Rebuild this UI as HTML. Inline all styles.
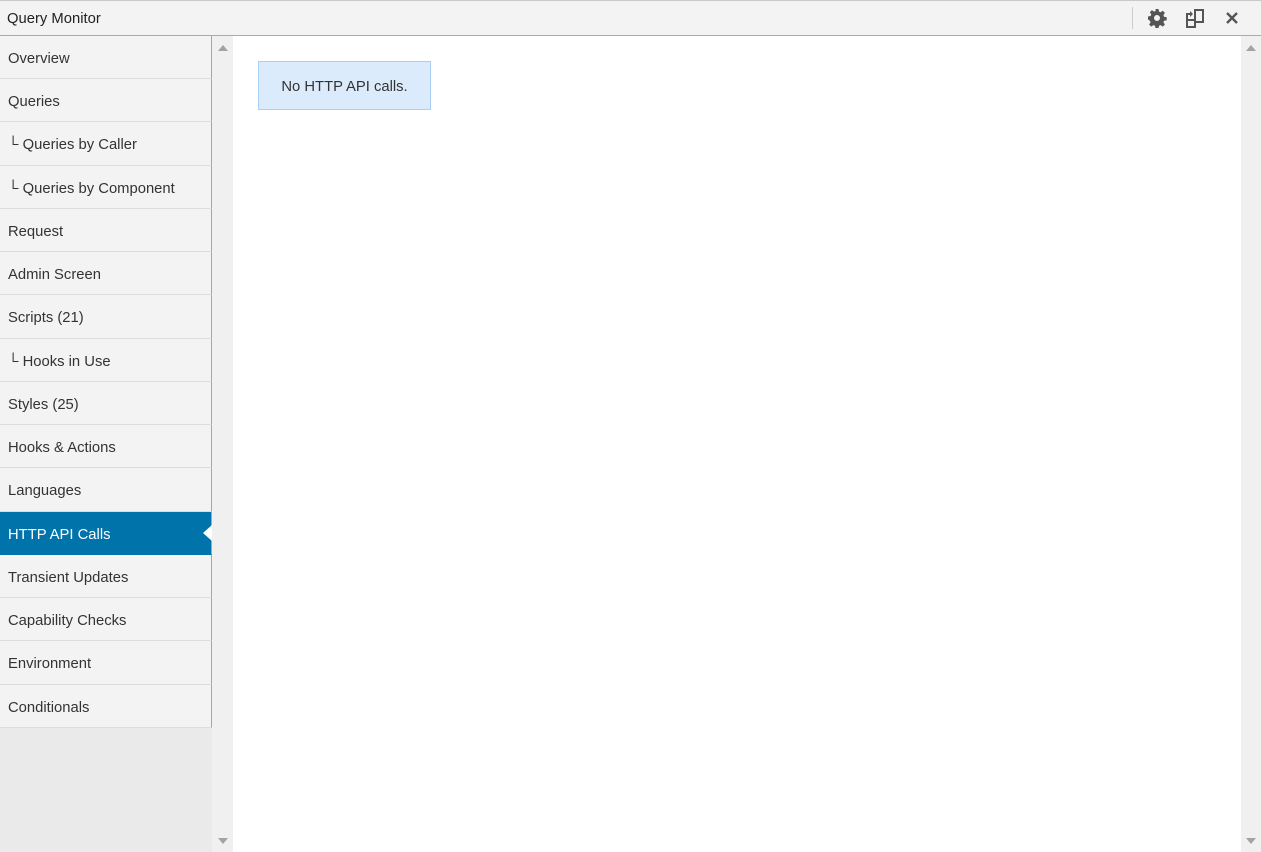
<!DOCTYPE html>
<html><head><meta charset="utf-8"><style>
*{box-sizing:border-box;margin:0;padding:0}
body{width:1261px;height:852px;overflow:hidden;background:#fff;font-family:"Liberation Sans",sans-serif;font-size:14px;color:#333;position:relative}
#hdr{position:absolute;left:0;top:0;width:1261px;height:36px;background:#f3f3f3;border-top:1px solid #c8c8c8;border-bottom:1px solid #aaa}
#hdr .t{position:absolute;left:7px;top:10px;font-size:14.8px;color:#222}
#hdr .sep{position:absolute;left:1132px;top:6px;width:1px;height:22px;background:#ccc}
#side{position:absolute;left:0;top:36px;width:212px;height:816px;background:#eaeaea}
.it{position:absolute;left:0;width:212px;background:#f3f3f3;border-right:1px solid #a7a7a7;border-bottom:1px solid #ddd;padding-left:8px;padding-top:2px;line-height:42px;font-size:14.8px;color:#333;white-space:nowrap}
.it.a{background:#0073aa;color:#fff;border-bottom-color:#0073aa}
.it.a:after{content:"";position:absolute;right:-1px;top:13px;border:8px solid transparent;border-right-color:#fff;border-left-width:0;border-right-width:9px}
.sb{position:absolute;top:36px;height:816px;background:#f0f0f0}
.up,.dn{position:absolute;left:6px;width:0;height:0;border-left:5px solid transparent;border-right:5px solid transparent}
.up{top:9px;border-bottom:6px solid #a3a3a3}
.dn{bottom:8px;border-top:6px solid #a3a3a3}
#note{position:absolute;left:258px;top:61px;width:173px;height:49px;background:#dcebfb;border:1px solid #a9cff5;font-size:14.8px;color:#333;padding-top:2px;line-height:47px;text-align:center}
</style></head><body>
<div id="hdr"><span class="t">Query Monitor</span><div class="sep"></div>
<svg style="position:absolute;left:1147px;top:7px" width="20" height="20" viewBox="0 0 20 20"><path fill="#555" d="M8.5 1h3l.5 2.6 1.6.7 2.2-1.5 2.1 2.1-1.5 2.2.7 1.6 2.6.5v3l-2.6.5-.7 1.6 1.5 2.2-2.1 2.1-2.2-1.5-1.6.7-.5 2.6h-3l-.5-2.6-1.6-.7-2.2 1.5-2.1-2.1 1.5-2.2-.7-1.6L1 11.5v-3l2.6-.5.7-1.6-1.5-2.2 2.1-2.1 2.2 1.5 1.6-.7zM10 7a3 3 0 100 6 3 3 0 000-6z"/></svg>
<svg style="position:absolute;left:1184px;top:7px" width="22" height="22" viewBox="0 0 22 22"><g fill="none" stroke="#555" stroke-width="2"><rect x="11" y="2" width="8" height="12"/><rect x="3" y="12" width="8" height="7"/><path d="M3 12V6h3"/></g><path fill="#555" d="M6 3l3 3-3 3z"/></svg>
<svg style="position:absolute;left:1225px;top:10px" width="14" height="14" viewBox="0 0 14 14"><path d="M2 2l10 10M12 2L2 12" stroke="#555" stroke-width="2.4"/></svg>
</div>
<div id="side">
<div class="it" style="top:0;height:43px">Overview</div>
<div class="it" style="top:43px;height:43px">Queries</div>
<div class="it" style="top:86px;height:44px">└ Queries by Caller</div>
<div class="it" style="top:130px;height:43px">└ Queries by Component</div>
<div class="it" style="top:173px;height:43px">Request</div>
<div class="it" style="top:216px;height:43px">Admin Screen</div>
<div class="it" style="top:259px;height:44px">Scripts (21)</div>
<div class="it" style="top:303px;height:43px">└ Hooks in Use</div>
<div class="it" style="top:346px;height:43px">Styles (25)</div>
<div class="it" style="top:389px;height:43px">Hooks &amp; Actions</div>
<div class="it" style="top:432px;height:44px">Languages</div>
<div class="it a" style="top:476px;height:43px">HTTP API Calls</div>
<div class="it" style="top:519px;height:43px">Transient Updates</div>
<div class="it" style="top:562px;height:43px">Capability Checks</div>
<div class="it" style="top:605px;height:44px">Environment</div>
<div class="it" style="top:649px;height:43px">Conditionals</div>
</div>
<div class="sb" style="left:212px;width:21px"><div class="up"></div><div class="dn"></div></div>
<div class="sb" style="left:1241px;width:20px"><div class="up" style="left:5px"></div><div class="dn" style="left:5px"></div></div>
<div id="note">No HTTP API calls.</div>
</body></html>
